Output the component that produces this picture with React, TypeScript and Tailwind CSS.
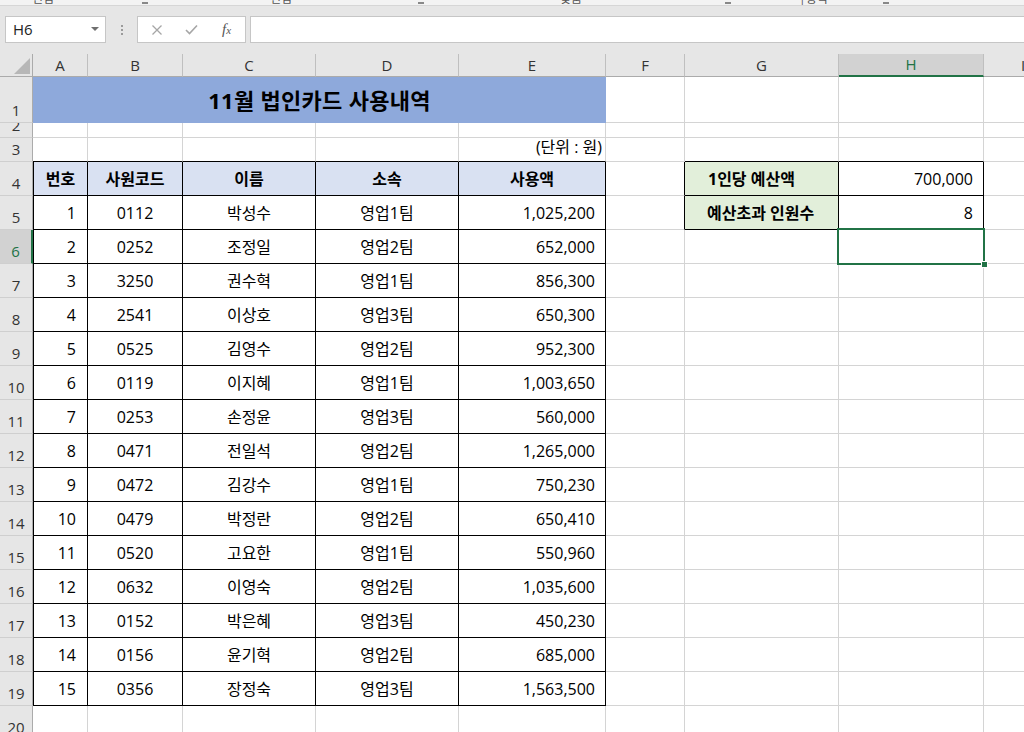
import React from "react";

const FONT = "font-['Open_Sans','Noto_Sans_CJK_KR',sans-serif]";

const COLS = ["A", "B", "C", "D", "E", "F", "G", "H", "I"];
const W = [
  "w-[55px]",
  "w-[95px]",
  "w-[133px]",
  "w-[143px]",
  "w-[147px]",
  "w-[79px]",
  "w-[154px]",
  "w-[145px]",
  "w-[79px]",
];

const DATA: [string, string, string, string, string][] = [
  ["1", "0112", "박성수", "영업1팀", "1,025,200"],
  ["2", "0252", "조정일", "영업2팀", "652,000"],
  ["3", "3250", "권수혁", "영업1팀", "856,300"],
  ["4", "2541", "이상호", "영업3팀", "650,300"],
  ["5", "0525", "김영수", "영업2팀", "952,300"],
  ["6", "0119", "이지혜", "영업1팀", "1,003,650"],
  ["7", "0253", "손정윤", "영업3팀", "560,000"],
  ["8", "0471", "전일석", "영업2팀", "1,265,000"],
  ["9", "0472", "김강수", "영업1팀", "750,230"],
  ["10", "0479", "박정란", "영업2팀", "650,410"],
  ["11", "0520", "고요한", "영업1팀", "550,960"],
  ["12", "0632", "이영숙", "영업2팀", "1,035,600"],
  ["13", "0152", "박은혜", "영업3팀", "450,230"],
  ["14", "0156", "윤기혁", "영업2팀", "685,000"],
  ["15", "0356", "장정숙", "영업3팀", "1,563,500"],
];

const HEADERS = ["번호", "사원코드", "이름", "소속", "사용액"];

function rowHeight(r: number) {
  if (r === 1) return "h-[46px]";
  if (r === 2) return "h-[15px]";
  if (r === 3) return "h-[24px]";
  return "h-[34px]";
}

type Def = { text?: string; cls: string };

function cellDef(r: number, c: number): Def {
  if (r === 3 && c === 4)
    return { text: "(단위 : 원)", cls: "items-end justify-end pr-[3px] pb-[2px] text-[13px]" };
  if (r === 4 && c <= 4)
    return { text: HEADERS[c], cls: "items-center justify-center font-bold bg-[#d9e1f2]" };
  if (r >= 5 && r <= 19 && c <= 4) {
    const d = DATA[r - 5];
    if (c === 0) return { text: d[0], cls: "items-center justify-end pr-[11px]" };
    if (c === 4) return { text: d[4], cls: "items-center justify-end pr-[10px]" };
    return { text: d[c], cls: "items-center justify-center" };
  }
  if (r === 4 && c === 6)
    return { text: "1인당 예산액", cls: "items-center justify-start pl-[23px] font-bold bg-[#e2efda]" };
  if (r === 5 && c === 6)
    return { text: "예산초과 인원수", cls: "items-center justify-start pl-[22px] font-bold bg-[#e2efda]" };
  if (r === 4 && c === 7) return { text: "700,000", cls: "items-center justify-end pr-[10px]" };
  if (r === 5 && c === 7) return { text: "8", cls: "items-center justify-end pr-[10px]" };
  return { cls: "" };
}

function borderCls(r: number, c: number) {
  const inTable = r >= 4 && r <= 19 && c <= 4;
  const inBox = r >= 4 && r <= 5 && (c === 6 || c === 7);
  const rightBlack = inTable || inBox || (r >= 4 && r <= 5 && c === 5);
  const bottomBlack = inTable || inBox || (r === 3 && (c <= 4 || c === 6 || c === 7));
  const r1 = rightBlack ? "border-r-black" : "border-r-[#d4d4d4]";
  const b1 = bottomBlack ? "border-b-black" : "border-b-[#d4d4d4]";
  const l1 = inTable && c === 0 ? "border-l border-l-black" : "";
  return `border-r border-b ${r1} ${b1} ${l1}`;
}

function RowHeader({ r }: { r: number }) {
  const sel = r === 6;
  return (
    <div
      className={`w-[33px] shrink-0 flex items-end justify-center overflow-hidden border-b border-b-[#cfcfcf] text-[15px] leading-[20px] pb-[2px] ${
        sel
          ? "bg-[#d2d2d2] text-[#217346] border-r-2 border-r-[#217346]"
          : "bg-[#e6e6e6] text-[#333] border-r border-r-[#ababab]"
      }`}
    >
      {r}
    </div>
  );
}

function Row({ r }: { r: number }) {
  return (
    <div className={`flex ${rowHeight(r)}`}>
      <RowHeader r={r} />
      {r === 1 ? (
        <>
          <div className="w-[573px] shrink-0 bg-[#8ea9db] flex items-center justify-center text-[22px] font-bold text-black tracking-[0.3px]">
            11월 법인카드 사용내역
          </div>
          {[5, 6, 7, 8].map((c) => (
            <div key={c} className={`${W[c]} shrink-0 ${borderCls(r, c)}`} />
          ))}
        </>
      ) : (
        COLS.map((_, c) => {
          const d = cellDef(r, c);
          const selected = r === 6 && c === 7;
          return (
            <div
              key={c}
              className={`${W[c]} shrink-0 flex whitespace-nowrap text-[16px] text-black ${borderCls(r, c)} ${d.cls} ${
                selected ? "relative" : ""
              }`}
            >
              {d.text}
              {selected && (
                <>
                  <div className="absolute -left-[2px] -top-[2px] -right-[2px] -bottom-[2px] border-2 border-[#217346] z-10" />
                  <div className="absolute -right-[5px] -bottom-[5px] w-[7px] h-[7px] bg-[#217346] border border-white z-20" />
                </>
              )}
            </div>
          );
        })
      )}
    </div>
  );
}

export default function App() {
  const rows = Array.from({ length: 20 }, (_, i) => i + 1);
  return (
    <div className={`w-[1024px] h-[732px] overflow-hidden bg-white ${FONT}`}>
      {/* ribbon bottom remnant */}
      <div className="h-[6px] bg-[#f3f3f3] border-b border-b-[#d6d6d6] overflow-hidden flex items-end text-[12px] leading-[12px] text-[#555]">
        <span className="ml-[32px] w-[34px] shrink-0">편집</span>
        <span className="ml-[76px] w-[6px] h-[2px] mb-[1px] shrink-0 bg-[#888]" />
        <span className="ml-[122px] w-[30px] shrink-0">편집</span>
        <span className="ml-[118px] w-[6px] h-[2px] mb-[1px] shrink-0 bg-[#888]" />
        <span className="ml-[136px] w-[30px] shrink-0">맞춤</span>
        <span className="ml-[135px] w-[6px] h-[2px] mb-[1px] shrink-0 bg-[#888]" />
        <span className="ml-[68px] w-[40px] shrink-0">|형식</span>
        <span className="ml-[44px] w-[6px] h-[2px] mb-[1px] shrink-0 bg-[#888]" />
      </div>

      {/* formula bar */}
      <div className="h-[48px] bg-[#e6e6e6] flex items-start pt-[10px] pl-[5px]">
        <div className="w-[101px] h-[27px] bg-white border border-[#c6c6c6] flex items-center justify-between pl-[7px] pr-[6px] text-[15px] text-[#222]">
          <span>H6</span>
          <svg width="8" height="5" viewBox="0 0 8 5">
            <path d="M0 0 L8 0 L4 4 Z" fill="#6f6f6f" />
          </svg>
        </div>
        <div className="w-[31px] h-[27px] flex flex-col items-center justify-center gap-[2px]">
          <span className="w-[2px] h-[2px] bg-[#9a9a9a]" />
          <span className="w-[2px] h-[2px] bg-[#9a9a9a]" />
          <span className="w-[2px] h-[2px] bg-[#9a9a9a]" />
        </div>
        <div className="w-[109px] h-[27px] bg-white border border-[#c6c6c6] flex items-center">
          <svg className="ml-[13px]" width="12" height="12" viewBox="0 0 12 12">
            <path d="M1.5 1.5 L10.5 10.5 M10.5 1.5 L1.5 10.5" stroke="#a6a6a6" strokeWidth="1.3" />
          </svg>
          <svg className="ml-[22px]" width="13" height="11" viewBox="0 0 13 11">
            <path d="M1 6 L4.5 9.5 L12 1.5" stroke="#a6a6a6" strokeWidth="1.6" fill="none" />
          </svg>
          <span className="ml-[24px] font-['Liberation_Serif',serif] italic text-[15px] text-[#555] leading-none">
            f<span className="text-[11px]">x</span>
          </span>
        </div>
        <div className="ml-[4px] flex-1 h-[27px] bg-white border border-[#c6c6c6] border-r-0" />
      </div>

      {/* column header */}
      <div className="flex h-[23px]">
        <div className="w-[33px] shrink-0 bg-[#e6e6e6] border-r border-b border-[#ababab] flex items-end justify-end pr-[2px] pb-[2px]">
          <svg width="16" height="16" viewBox="0 0 16 16">
            <path d="M16 0 L16 16 L0 16 Z" fill="#b7b7b7" />
          </svg>
        </div>
        {COLS.map((l, c) =>
          c === 7 ? (
            <div
              key={l}
              className={`${W[c]} shrink-0 bg-[#d2d2d2] border-r border-r-[#bfbfbf] border-b-2 border-b-[#217346] flex items-center justify-center text-[15px] text-[#217346]`}
            >
              {l}
            </div>
          ) : (
            <div
              key={l}
              className={`${W[c]} shrink-0 bg-[#e6e6e6] border-r border-r-[#bfbfbf] border-b border-b-[#ababab] flex items-center justify-center text-[15px] text-[#333]`}
            >
              {l}
            </div>
          )
        )}
      </div>

      {/* rows */}
      {rows.map((r) => (
        <Row key={r} r={r} />
      ))}
    </div>
  );
}
